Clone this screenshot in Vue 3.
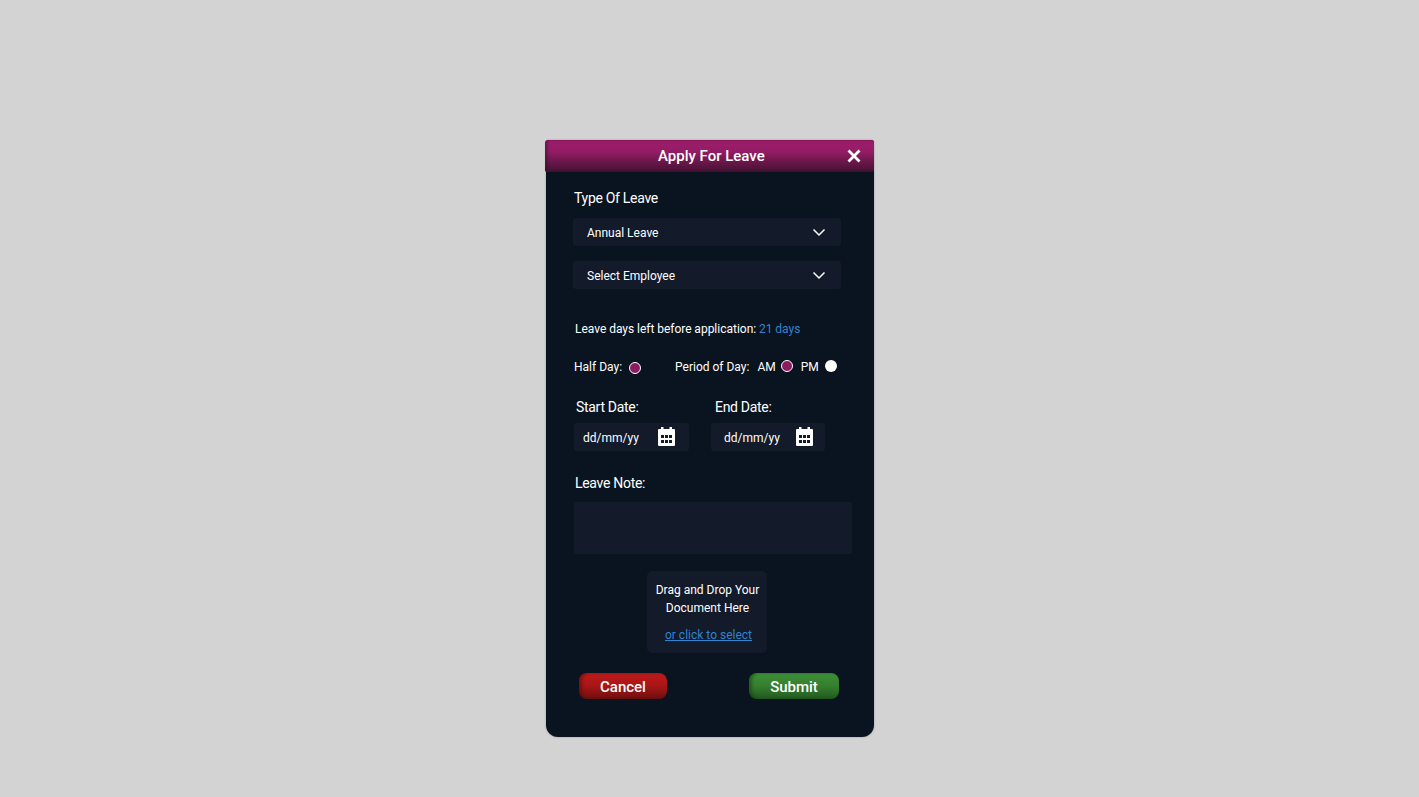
<template>
  <div class="page">
    <div class="modal">
      <div class="modal-header">
        <span class="modal-title">Apply For Leave</span>
        <svg class="close-icon" width="14" height="14" viewBox="0 0 14 14" fill="none" stroke="#fff" stroke-width="2.8">
          <path d="M1.5 1.5l11 11M12.5 1.5l-11 11"></path>
        </svg>
      </div>

      <div class="modal-body">
        <div class="type-label">Type Of Leave</div>

        <div v-for="item in selects" :key="item" class="select-box">
          <span>{{ item }}</span>
          <svg width="14" height="9" viewBox="0 0 14 9" fill="none" stroke="#fff" stroke-width="1.5">
            <path d="M1.5 1.5L7 7l5.500-5.500"></path>
          </svg>
        </div>

        <p class="days-left">Leave days left before application: <span class="blue">21 days</span></p>

        <div class="radio-row">
          <span>Half Day:</span>
          <span class="radio checked half"></span>
          <span class="period">Period of Day:</span>
          <span class="am">AM</span>
          <span class="radio checked raised"></span>
          <span class="pm">PM</span>
          <span class="radio raised"></span>
        </div>

        <div class="dates">
          <div v-for="d in dates" :key="d.label" class="date-field" :class="d.cls">
            <label>{{ d.label }}</label>
            <div class="date-box">
              <span>dd/mm/yy</span>
              <svg width="17" height="19" viewBox="0 0 17 19" fill="#fff">
                <path d="M3 0h2.500v3H3zM11.500 0H14v3h-2.500z"></path>
                <path fill-rule="evenodd" d="M1 2h15a1 1 0 0 1 1 1v15a1 1 0 0 1-1 1H1a1 1 0 0 1-1-1V3a1 1 0 0 1 1-1zM3 8v3h3V8zM7 8v3h3V8zM11 8v3h3V8zM3 13v3h3v-3zM7 13v3h3v-3zM11 13v3h3v-3z"></path>
              </svg>
            </div>
          </div>
        </div>

        <div class="note-label">Leave Note:</div>
        <div class="note-box"></div>

        <div class="drop-zone">
          <p>Drag and Drop Your<br />Document Here</p>
          <a class="blue">or click to select</a>
        </div>

        <div class="actions">
          <button class="btn btn-cancel">Cancel</button>
          <button class="btn btn-submit">Submit</button>
        </div>
      </div>
    </div>
  </div>
</template>

<script setup>
const selects = ['Annual Leave', 'Select Employee']
const dates = [
  { label: 'Start Date:', cls: 'start' },
  { label: 'End Date:', cls: 'end' }
]
</script>

<style scoped>
.page {
  min-height: 797px;
  box-sizing: border-box;
  padding-top: 140px;
  display: flex;
  justify-content: center;
  background: #d3d3d3;
  font-family: Roboto, sans-serif;
  color: #fff;
}

.modal {
  width: 328px;
  height: 597px;
  margin-left: 1px;
  background: #0a1420;
  border-radius: 3px 3px 12px 12px;
  box-shadow: 0 0 2px rgba(0, 0, 0, 0.3);
}

.modal-header {
  height: 32px;
  margin-left: -1px;
  padding: 0 13px 0 0;
  display: flex;
  align-items: center;
  justify-content: flex-end;
  position: relative;
  background: linear-gradient(180deg, #9c1d6b 0%, #951c66 35%, #431232 100%);
  border-radius: 3px 3px 2px 2px;
  box-shadow: inset 3px 0 3px rgba(40, 10, 30, 0.35);
}

.modal-title {
  position: absolute;
  left: 113px;
  top: 7px;
  font-size: 15px;
  font-weight: 500;
  line-height: 18px;
}

.modal-body {
  padding: 0 22px 0 27px;
}

.type-label {
  margin: 18px 0 0 1px;
  font-size: 14px;
  letter-spacing: -0.3px;
  line-height: 17px;
}

.select-box {
  width: 268px;
  height: 28px;
  margin-top: 11px;
  padding: 0 15.500px 0 14px;
  box-sizing: border-box;
  display: flex;
  align-items: center;
  justify-content: space-between;
  background: #131a2a;
  border-radius: 3px;
  font-size: 12px;
}

.select-box span,
.date-box span {
  margin-top: 2px;
}

.select-box + .select-box {
  margin-top: 15px;
}

.days-left {
  margin: 33px 0 0 2px;
  font-size: 12px;
  word-spacing: -0.2px;
  line-height: 15px;
}

.blue {
  color: #2f84cf;
}

.radio-row {
  margin: 22px 0 0 1px;
  height: 16px;
  display: flex;
  align-items: center;
  font-size: 12px;
}

.radio {
  width: 12px;
  height: 12px;
  border-radius: 50%;
  background: #fff;
  flex-shrink: 0;
}

.radio.checked {
  box-sizing: border-box;
  border: 1.5px solid #fff;
  background: #8a1c60;
}

.radio.raised {
  margin-bottom: 2px;
}

.half {
  margin: 2px 0 0 7px;
}

.period {
  margin-left: 34px;
}

.am {
  margin-left: 8px;
}

.am + .radio {
  margin-left: 5px;
}

.pm {
  margin-left: 8px;
}

.pm + .radio {
  margin-left: 6px;
}

.dates {
  display: flex;
  margin: 24px 0 0 1px;
}

.date-field {
  width: 115px;
}

.date-field.end {
  width: 114px;
  margin-left: 22px;
}

.date-field label {
  display: block;
  margin-left: 2px;
  font-size: 14px;
  letter-spacing: -0.3px;
  line-height: 17px;
}

.date-field.end label {
  margin-left: 4px;
}

.date-box {
  height: 28px;
  margin-top: 7px;
  padding: 0 14px 0 9px;
  box-sizing: border-box;
  display: flex;
  align-items: center;
  justify-content: space-between;
  background: #131a2a;
  border-radius: 3px;
  font-size: 12px;
}

.date-box svg {
  margin-bottom: 2px;
}

.date-field.end .date-box {
  padding: 0 12px 0 13px;
}

.note-label {
  margin: 24px 0 0 2px;
  font-size: 14px;
  letter-spacing: -0.3px;
  line-height: 17px;
}

.note-box {
  width: 278px;
  height: 52px;
  margin: 10px 0 0 1px;
  background: #131a2a;
  border-radius: 2px;
}

.drop-zone {
  width: 120px;
  height: 82px;
  margin: 17px 0 0 74px;
  padding-top: 10px;
  box-sizing: border-box;
  text-align: center;
  background: #131a2a;
  border-radius: 5px;
  font-size: 12px;
  line-height: 18px;
}

.drop-zone p {
  margin: 0 0 9px 0;
  padding-left: 1px;
}

.drop-zone a {
  display: block;
  padding-left: 3px;
  text-decoration: underline;
}

.actions {
  margin: 20px 0 0 6px;
  display: flex;
  justify-content: space-between;
  width: 260px;
}

.btn {
  height: 26px;
  padding: 2px 0 0;
  border: none;
  border-radius: 8px;
  color: #fff;
  font-family: Roboto, sans-serif;
  font-size: 15px;
  font-weight: 500;
}

.btn-cancel {
  width: 88px;
  background: linear-gradient(180deg, #c01a1a 0%, #a81616 50%, #6e0f0f 100%);
  box-shadow: inset 3px 0 3px rgba(80, 10, 10, 0.5);
}

.btn-submit {
  width: 90px;
  background: linear-gradient(180deg, #3f9038 0%, #357e2f 50%, #225a20 100%);
  box-shadow: inset 3px 0 3px rgba(15, 60, 15, 0.5);
}
</style>

<style>
html, body {
  background: #d3d3d3;
}
</style>
